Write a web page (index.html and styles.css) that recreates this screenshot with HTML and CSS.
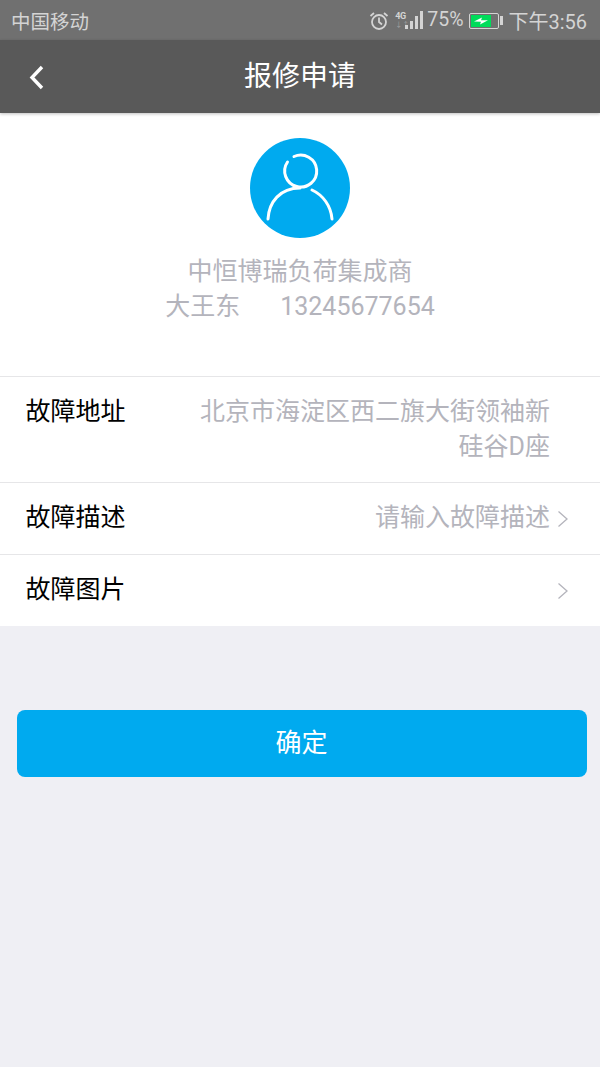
FILE: index.html
```html
<!DOCTYPE html>
<html lang="zh">
<head>
<meta charset="utf-8">
<title>报修申请</title>
<link rel="stylesheet" href="styles.css">
</head>
<body>
<div class="status">
  <span class="carrier">中国移动</span>
  <div class="status-right">
    <svg class="alarm" width="20" height="20" viewBox="0 0 20 20" fill="none" stroke="#d4d4d4" stroke-width="1.800"><circle cx="10" cy="11" r="7"/><path d="M10 6.500V11l3 2.500M1.500 5 5 2M18.500 5 15 2"/></svg>
    <div class="net">
      <span class="net-top">4G</span>
      <span class="net-bottom">↓↑</span>
    </div>
    <div class="bars"><i class="b1"></i><i class="b2"></i><i class="b3"></i><i class="b4"></i></div>
    <span class="pct">75%</span>
    <div class="battery"><div class="level"><svg width="18" height="10" viewBox="0 0 18 10"><path fill="#fff" d="M2 5.500 10 1.500 9 4.300 16 4.300 8 8.500 9 5.700Z"/></svg></div></div>
    <div class="battery-tip"></div>
    <span class="time">下午3:56</span>
  </div>
</div>
<header class="nav">
  <svg class="back" width="18" height="28" viewBox="0 0 18 28" fill="none" stroke="#fff" stroke-width="3.400"><path d="M15 3 5 13.500 15 24"/></svg>
  <h1 class="title">报修申请</h1>
</header>
<section class="profile">
  <div class="avatar">
    <svg width="100" height="100" viewBox="0 0 100 100" fill="none" stroke="#fff" stroke-width="3" stroke-linecap="round"><path d="M44 18.500A16 16 0 1 1 37.500 24"/><path d="M18 81C19 64 30 50 50 50"/><path d="M62 52C73 57 81 68 82 81"/></svg>
  </div>
  <p class="company">中恒博瑞负荷集成商</p>
  <p class="contact"><span>大王东</span><span>13245677654</span></p>
</section>
<section class="list">
  <div class="row row-address">
    <span class="label">故障地址</span>
    <span class="value address">北京市海淀区西二旗大街领袖新硅谷D座</span>
  </div>
  <div class="row">
    <span class="label">故障描述</span>
    <span class="value">请输入故障描述</span>
    <svg class="chev" width="12" height="18" viewBox="0 0 12 18" fill="none" stroke="#b4b4bc" stroke-width="1.300"><path d="M1.500 1.500 10 9 1.500 16.500"/></svg>
  </div>
  <div class="row">
    <span class="label">故障图片</span>
    <span class="value"></span>
    <svg class="chev" width="12" height="18" viewBox="0 0 12 18" fill="none" stroke="#b4b4bc" stroke-width="1.300"><path d="M1.500 1.500 10 9 1.500 16.500"/></svg>
  </div>
</section>
<button class="confirm" type="button">确定</button>
</body>
</html>
```
FILE: styles.css
```css
* { box-sizing: border-box; }
html, body { margin: 0; padding: 0; }
body {
  width: 600px;
  height: 1067px;
  overflow: hidden;
  background: #efeff4;
  font-family: "Roboto", "Noto Sans CJK SC", sans-serif;
}
.status {
  height: 40px;
  background: #707070;
  color: #d4d4d4;
  display: flex;
  align-items: center;
  justify-content: space-between;
  padding: 1px 13px 0 11px;
  font-size: 19.500px;
}
.status-right { display: flex; align-items: center; }
.alarm { margin-right: 6px; }
.net { width: 10px; display: flex; flex-direction: column; line-height: 9px; }
.net-top { font-size: 9px; font-weight: 700; letter-spacing: -.5px; }
.net-bottom { font-size: 7px; opacity: .5; }
.bars { display: flex; align-items: flex-end; gap: 2px; height: 18px; margin: 0 4px 2px 0; }
.bars i { display: block; width: 3px; background: #d4d4d4; }
.b1 { height: 4px; }
.b2 { height: 8px; }
.b3 { height: 13px; }
.b4 { height: 18px; }
.pct { margin: 0 6px 2px 0; }
.battery { width: 30px; height: 16px; border: 1px solid #d4d4d4; border-radius: 2px; padding: 1px; }
.level { width: 20px; height: 12px; background: #00dc5a; display: flex; align-items: center; justify-content: center; }
.battery-tip { width: 3px; height: 9px; background: #d4d4d4; margin: 0 5px 0 1px; }
.time { font-size: 20px; }
.nav {
  position: relative;
  height: 73px;
  background: #595959;
  display: flex;
  align-items: center;
  justify-content: center;
  box-shadow: 0 1px 3px rgba(0, 0, 0, .25);
}
.back { position: absolute; left: 27px; top: 24px; }
.title { margin: 0; color: #fff; font-size: 28px; font-weight: 400; line-height: 36px; }
.profile {
  height: 263px;
  background: #fff;
  display: flex;
  flex-direction: column;
  align-items: center;
  padding-top: 25px;
  color: #b4b4bc;
  font-size: 25px;
  line-height: 35px;
}
.avatar { width: 100px; height: 100px; border-radius: 50%; background: #00aaef; margin-bottom: 16px; }
.avatar svg { display: block; }
.company, .contact { margin: 0; }
.contact { display: flex; gap: 40px; }
.list { background: #fff; }
.row {
  display: flex;
  align-items: center;
  height: 72px;
  padding: 0 31px 0 25.500px;
  border-top: 1px solid #e6e6e8;
  font-size: 25px;
}
.row-address { height: 106px; align-items: flex-start; padding: 17px 50px 0 25.500px; }
.label { color: #000; line-height: 35px; flex: none; margin-bottom: 2px; }
.value { flex: 1; text-align: right; color: #b4b4bc; line-height: 35px; margin: 0 7px 2px 0; }
.address { margin: 0 0 0 70px; }
.chev { flex: none; }
.confirm {
  display: block;
  width: 570px;
  height: 67px;
  margin: 84px 0 0 16.500px;
  padding: 0 0 6px;
  border: 0;
  border-radius: 8px;
  background: #00aaef;
  color: #fff;
  font: inherit;
  font-size: 26px;
}
```
